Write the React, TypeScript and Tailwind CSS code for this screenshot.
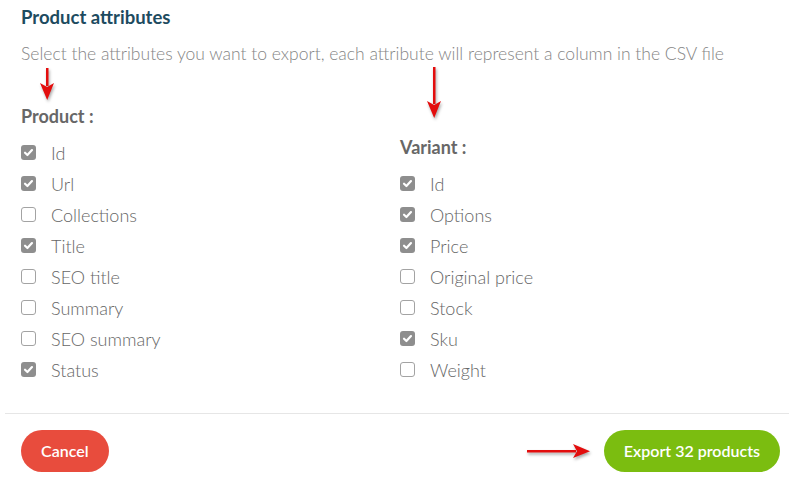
const productFields = [
  { label: 'Id', checked: true },
  { label: 'Url', checked: true },
  { label: 'Collections', checked: false },
  { label: 'Title', checked: true },
  { label: 'SEO title', checked: false },
  { label: 'Summary', checked: false },
  { label: 'SEO summary', checked: false },
  { label: 'Status', checked: true },
]

const variantFields = [
  { label: 'Id', checked: true },
  { label: 'Options', checked: true },
  { label: 'Price', checked: true },
  { label: 'Original price', checked: false },
  { label: 'Stock', checked: false },
  { label: 'Sku', checked: true },
  { label: 'Weight', checked: false },
]

function Checkbox({ checked }: { checked: boolean }) {
  if (checked) {
    return (
      <span className="flex h-[15px] w-[15px] items-center justify-center rounded-[3px] bg-[#8e8e8e]">
        <svg width="11" height="11" viewBox="0 0 12 12">
          <path d="M2.2 6.3 4.8 8.8 9.8 3.4" fill="none" stroke="#fff" strokeWidth="2.4" strokeLinecap="round" strokeLinejoin="round" />
        </svg>
      </span>
    )
  }
  return <span className="box-border block h-[15px] w-[15px] rounded-[3px] border border-[#a3a3a3] bg-white" />
}

function FieldList({ title, fields }: { title: string; fields: { label: string; checked: boolean }[] }) {
  return (
    <div className="flex flex-col">
      <div className="mb-[9px] h-[24px] text-[18px] font-bold leading-[24px] text-[#676767]">{title}</div>
      {fields.map((f) => (
        <label key={f.label} className="flex h-[31px] items-center">
          <span className="flex w-[30px] items-center">
            <Checkbox checked={f.checked} />
          </span>
          <span className="text-[18px] font-light leading-[24px] text-[#666]">{f.label}</span>
        </label>
      ))}
    </div>
  )
}

function Arrow({ className, length, horizontal }: { className: string; length: number; horizontal?: boolean }) {
  const w = horizontal ? length : 18
  const h = horizontal ? 18 : length
  return (
    <svg
      className={className}
      width={w}
      height={h}
      viewBox={`0 0 ${w} ${h}`}
      style={{ filter: 'drop-shadow(1px 2px 1.5px rgba(0,0,0,0.35))' }}
    >
      {horizontal ? (
        <>
          <rect x="1" y="8" width={length - 16} height="2.5" fill="#e30d0d" />
          <path d={`M${length - 18} 2 L${length - 1} 9.2 L${length - 18} 16 L${length - 14} 9.2 Z`} fill="#e30d0d" />
        </>
      ) : (
        <>
          <rect x="8" y="1" width="2.5" height={length - 16} fill="#e30d0d" />
          <path d={`M2 ${length - 18} L9.2 ${length - 1} L16 ${length - 18} L9.2 ${length - 14} Z`} fill="#e30d0d" />
        </>
      )}
    </svg>
  )
}

export default function App() {
  return (
    <div className="relative h-[481px] w-[789px] overflow-hidden bg-white" style={{ fontFamily: 'Lato, "Open Sans", sans-serif' }}>
      <div className="px-[21px] pt-[5px]">
        <h2 className="h-[24px] text-[18.5px] font-bold leading-[24px] text-[#1d4b5f]">Product attributes</h2>
        <p className="mt-[13px] h-[24px] whitespace-nowrap text-[17.5px] font-light leading-[24px] text-[#858585]">
          Select the attributes you want to export, each attribute will represent a column in the CSV file
        </p>
        <div className="mt-[38px] flex">
          <div className="w-[379px]">
            <FieldList title="Product :" fields={productFields} />
          </div>
          <div className="pt-[31px]">
            <FieldList title="Variant :" fields={variantFields} />
          </div>
        </div>
      </div>

      <div className="ml-[5px] mt-[28px] h-px bg-[#e6e6e6]" />

      <div className="flex items-center justify-between pl-[21px] pr-[9px] pt-[16px]">
        <button className="h-[42px] rounded-full bg-[#e84c3d] px-[20px] text-[16px] font-semibold text-white">Cancel</button>
        <button className="h-[42px] rounded-full bg-[#7bbd10] px-[20px] text-[16px] font-semibold text-white">Export 32 products</button>
      </div>

      <Arrow className="absolute left-[38px] top-[67px]" length={34} />
      <Arrow className="absolute left-[425px] top-[66px]" length={53} />
      <Arrow className="absolute left-[526px] top-[442px]" length={65} horizontal />
    </div>
  )
}
